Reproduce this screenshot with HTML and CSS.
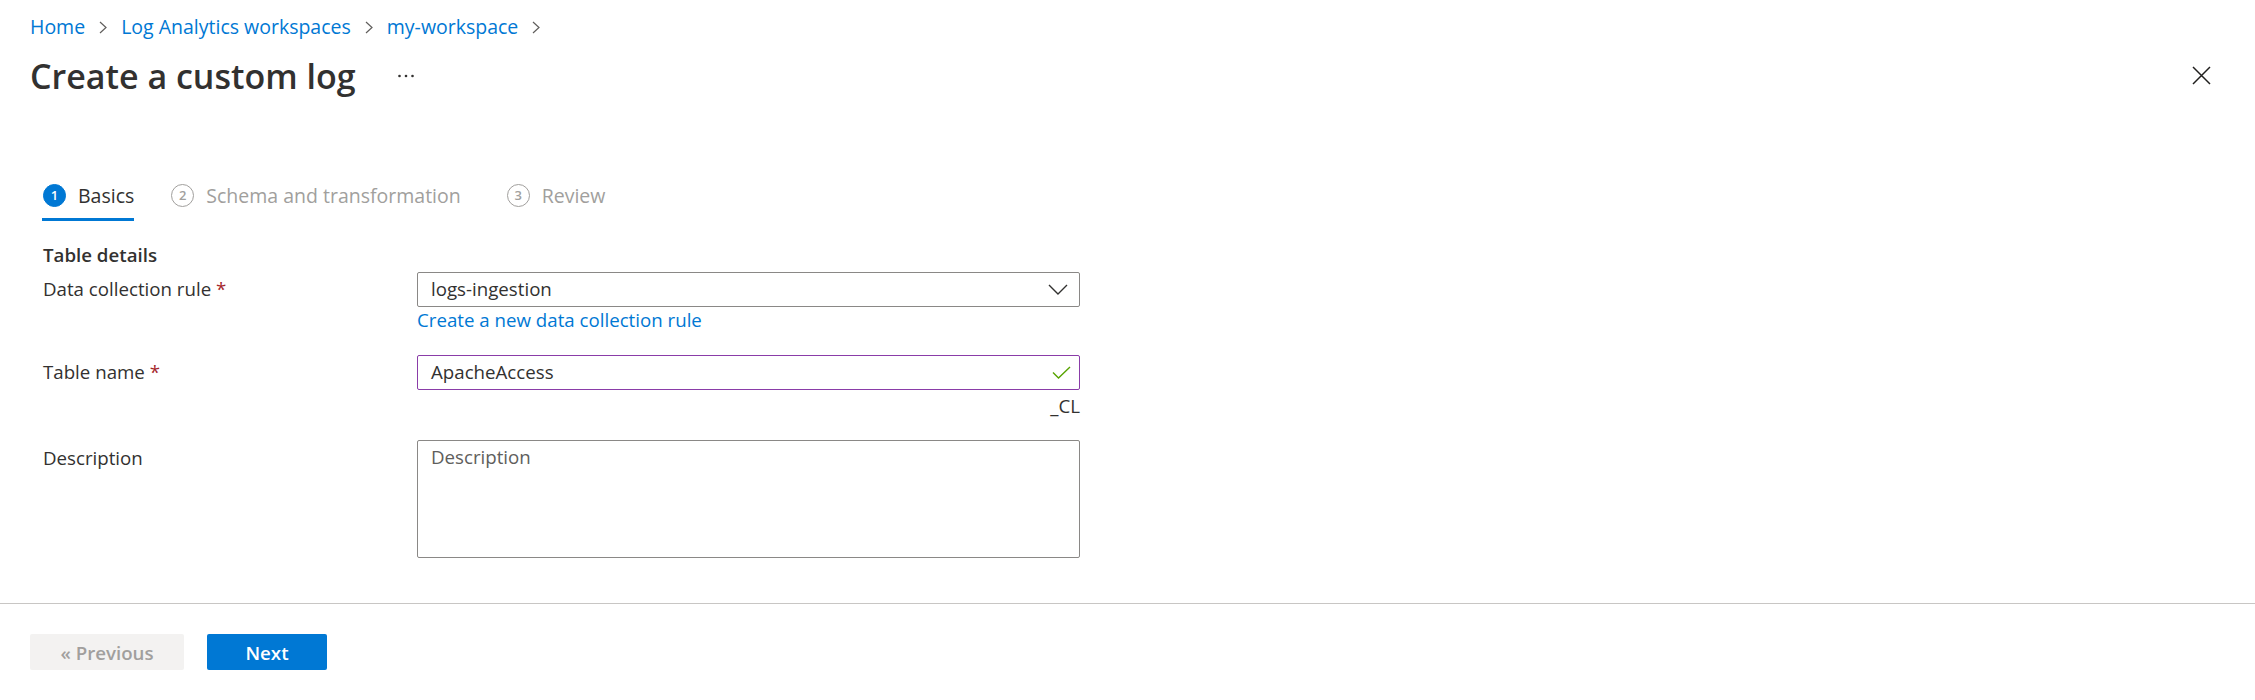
FILE: index.html
```html
<!DOCTYPE html>
<html lang="en">
<head>
<meta charset="utf-8">
<title>Create a custom log</title>
<link rel="stylesheet" href="styles.css">
</head>
<body>
<div class="page">
  <header class="header">
    <nav class="breadcrumb">
      <a class="crumb" href="#">Home</a>
      <svg class="chev" width="8" height="13" viewBox="0 0 8 13"><polyline points="1,1 7,6.5 1,12" fill="none" stroke="#605e5c" stroke-width="1.2"/></svg>
      <a class="crumb" href="#">Log Analytics workspaces</a>
      <svg class="chev" width="8" height="13" viewBox="0 0 8 13"><polyline points="1,1 7,6.5 1,12" fill="none" stroke="#605e5c" stroke-width="1.2"/></svg>
      <a class="crumb" href="#">my-workspace</a>
      <svg class="chev" width="8" height="13" viewBox="0 0 8 13"><polyline points="1,1 7,6.5 1,12" fill="none" stroke="#605e5c" stroke-width="1.2"/></svg>
    </nav>
    <div class="title-row">
      <h1 class="title">Create a custom log</h1>
      <button class="more" aria-label="More">
        <svg width="16" height="4" viewBox="0 0 16 4"><circle cx="1.5" cy="2" r="1.3" fill="#323130"/><circle cx="8" cy="2" r="1.3" fill="#323130"/><circle cx="14.5" cy="2" r="1.3" fill="#323130"/></svg>
      </button>
      <button class="close" aria-label="Close">
        <svg width="19" height="19" viewBox="0 0 19 19"><path d="M1 1L18 18M18 1L1 18" stroke="#201f1e" stroke-width="1.5" fill="none"/></svg>
      </button>
    </div>
  </header>

  <div class="tabs">
    <div class="tab active"><span class="num">1</span><span class="tab-label">Basics</span></div>
    <div class="tab"><span class="num">2</span><span class="tab-label">Schema and transformation</span></div>
    <div class="tab tab-last"><span class="num">3</span><span class="tab-label">Review</span></div>
  </div>

  <section class="form">
    <h2 class="section-title">Table details</h2>
    <div class="row">
      <label class="label">Data collection rule <span class="req">*</span></label>
      <div class="control">
        <div class="dropdown">
          <span>logs-ingestion</span>
          <svg width="20" height="11" viewBox="0 0 20 11"><polyline points="1,1 10,10 19,1" fill="none" stroke="#323130" stroke-width="1.4"/></svg>
        </div>
        <a class="link" href="#">Create a new data collection rule</a>
      </div>
    </div>
    <div class="row">
      <label class="label">Table name <span class="req">*</span></label>
      <div class="control">
        <div class="textbox valid">
          <span>ApacheAccess</span>
          <svg width="19" height="13" viewBox="0 0 19 13"><polyline points="1,6.5 6.5,12 18,1" fill="none" stroke="#57a300" stroke-width="1.4"/></svg>
        </div>
        <div class="suffix">_CL</div>
      </div>
    </div>
    <div class="row">
      <label class="label">Description</label>
      <div class="control">
        <textarea class="textarea" placeholder="Description"></textarea>
      </div>
    </div>
  </section>

  <footer class="footer">
    <button class="btn btn-prev">« Previous</button>
    <button class="btn btn-next">Next</button>
  </footer>
</div>
</body>
</html>
```

FILE: styles.css
```css
* { box-sizing: border-box; }

html, body {
  margin: 0;
  padding: 0;
  background: #ffffff;
}

body {
  font-family: "Segoe UI", "Open Sans", "Noto Sans", sans-serif;
  font-size: 18.7px;
  color: #323130;
  height: 700px;
  overflow: hidden;
}

.page {
  display: flex;
  flex-direction: column;
}

.header {
  padding: 14px 44px 0 30px;
}

.breadcrumb {
  display: flex;
  align-items: center;
  gap: 14px;
  font-size: 19.5px;
  line-height: 26px;
  height: 26px;
}

.crumb {
  color: #0078d4;
  text-decoration: none;
}

.chev { display: block; }

.title-row {
  display: flex;
  align-items: center;
  margin-top: 12.6px;
  height: 46px;
}

.title {
  margin: 0;
  font-size: 34px;
  font-weight: 600;
  line-height: 46px;
  color: #323130;
}

.more {
  margin-left: 42px;
  border: 0;
  background: none;
  padding: 0;
  display: flex;
}

.close {
  margin-left: auto;
  border: 0;
  background: none;
  padding: 0;
  display: flex;
}

.tabs {
  display: flex;
  gap: 36px;
  margin-top: 83.4px;
  padding-left: 42px;
}

.tab {
  display: flex;
  align-items: center;
  gap: 12px;
  padding: 0 0 8px 1px;
  border-bottom: 3px solid transparent;
  font-size: 19.5px;
  line-height: 28px;
  color: #a19f9d;
}

.tab-last { margin-left: 9px; }

.tab.active {
  border-bottom-color: #0078d4;
  color: #323130;
}

.num {
  width: 23px;
  height: 23px;
  border-radius: 50%;
  border: 1.5px solid #a19f9d;
  display: flex;
  align-items: center;
  justify-content: center;
  font-size: 13px;
  font-weight: 600;
  line-height: 1;
  color: #a19f9d;
}

.tab.active .num {
  background: #0078d4;
  border-color: #0078d4;
  color: #ffffff;
}

.form {
  padding-left: 43px;
  margin-top: 21px;
}

.section-title {
  margin: 0;
  font-size: 18.7px;
  font-weight: 600;
  line-height: 26px;
}

.row {
  display: grid;
  grid-template-columns: 374px 663px;
  margin-top: 4px;
}

.row + .row { margin-top: 22px; }
.row:last-child { margin-top: 21px; }

.label {
  padding-top: 4.5px;
  line-height: 26px;
}

.req { color: #a4262c; }

.control {
  display: flex;
  flex-direction: column;
}

.dropdown, .textbox {
  height: 35px;
  border: 1px solid #8a8886;
  border-radius: 2px;
  display: flex;
  align-items: center;
  justify-content: space-between;
  padding: 0 11px 0 13px;
  line-height: 26px;
}

.textbox.valid {
  border-color: #8a3ca8;
  padding-right: 8px;
}

.link {
  color: #0078d4;
  text-decoration: none;
  line-height: 26px;
}

.suffix {
  align-self: flex-end;
  line-height: 26px;
  margin-top: 3.5px;
}

.textarea {
  height: 118px;
  border: 1px solid #8a8886;
  border-radius: 2px;
  padding: 3px 13px;
  font: inherit;
  line-height: 26px;
  color: #323130;
  resize: none;
}

.textarea::placeholder { color: #605e5c; opacity: 1; }

.footer {
  margin-top: 45px;
  border-top: 1px solid #c8c6c4;
  padding: 30px 0 0 30px;
  display: flex;
  gap: 23px;
}

.btn {
  height: 36px;
  border: 0;
  border-radius: 2px;
  font-family: inherit;
  font-size: 18.7px;
  font-weight: 600;
  padding: 0;
}

.btn-prev {
  width: 154px;
  background: #f3f2f1;
  color: #a19f9d;
}

.btn-next {
  width: 120px;
  background: #0078d4;
  color: #ffffff;
}
```
